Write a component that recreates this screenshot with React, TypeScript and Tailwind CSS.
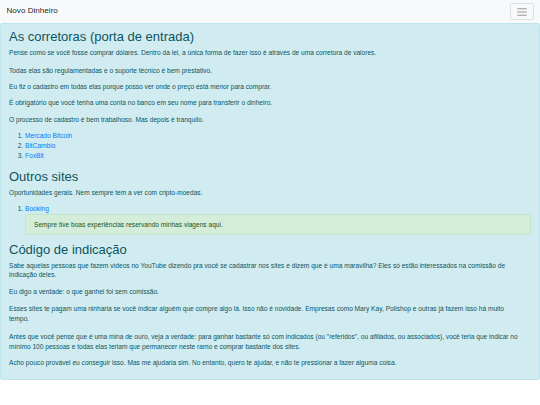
import React from "react";

export default function App() {
  return (
    <div className="min-h-[405px] bg-white text-[6.6px] leading-[9.75px] text-[#212529]" style={{ fontFamily: '"Liberation Sans", Arial, sans-serif' }}>
      <nav className="flex items-center justify-between bg-[#f8f9fa] px-[6.5px] py-[3.25px]">
        <span className="py-[2px] text-[8.125px] leading-[1.5] text-black/90">Novo Dinheiro</span>
        <button className="flex h-[16.5px] w-[24px] items-center justify-center rounded-[1.6px] border border-black/10">
          <svg width="12" height="12" viewBox="0 0 30 30">
            <path d="M4 7h22M4 15h22M4 23h22" stroke="rgba(0,0,0,0.5)" strokeWidth="2" strokeLinecap="round" />
          </svg>
        </button>
      </nav>
      <div className="mb-[6.5px] rounded-[1.6px] border border-[#bee5eb] bg-[#d1ecf1] px-[8px] py-[4.875px] text-[#0c5460]">
        <h2 className="mb-[3.25px] text-[13px] leading-[1.2] font-medium">As corretoras (porta de entrada)</h2>
        <p className="mb-[8.5px]">Pense como se você fosse comprar dólares. Dentro da lei, a única forma de fazer isso é através de uma corretora de valores.</p>
        <p className="mb-[6.5px]">Todas elas são regulamentadas e o suporte técnico é bem prestativo.</p>
        <p className="mb-[6.5px]">Eu fiz o cadastro em todas elas porque posso ver onde o preço está menor para comprar.</p>
        <p className="mb-[6.5px]">É obrigatório que você tenha uma conta no banco em seu nome para transferir o dinheiro.</p>
        <p className="mb-[6.5px]">O processo de cadastro é bem trabalhoso. Mas depois é tranquilo.</p>
        <ol className="mb-[8px] list-decimal pl-[16px] leading-[10px]">
          <li><a className="text-[#007bff]">Mercado Bitcoin</a></li>
          <li><a className="text-[#007bff]">BitCambio</a></li>
          <li><a className="text-[#007bff]">FoxBit</a></li>
        </ol>
        <h2 className="mb-[3.25px] text-[13px] leading-[1.2] font-medium">Outros sites</h2>
        <p className="mb-[6.5px]">Oportunidades gerais. Nem sempre tem a ver com cripto-moedas.</p>
        <ol className="mb-[6.5px] list-decimal pl-[16px]">
          <li>
            <a className="text-[#007bff]">Booking</a>
            <div className="rounded-[1.6px] border border-[#c3e6cb] bg-[#d4edda] px-[8px] py-[4.875px] text-[#155724]">
              Sempre tive boas experiências reservando minhas viagens aqui.
            </div>
          </li>
        </ol>
        <h2 className="mb-[3.25px] text-[13px] leading-[1.2] font-medium">Código de indicação</h2>
        <p className="mb-[6.5px]">Sabe aquelas pessoas que fazem vídeos no YouTube dizendo pra você se cadastrar nos sites e dizem que é uma maravilha? Eles só estão interessados na comissão de indicação deles.</p>
        <p className="mb-[8px]">Eu digo a verdade: o que ganhei foi sem comissão.</p>
        <p className="mb-[8px]">Esses sites te pagam uma ninharia se você indicar alguém que compre algo lá. Isso não é novidade. Empresas como Mary Kay, Polishop e outras já fazem isso há muito<br />tempo.</p>
        <p className="mb-[6.5px]">Antes que você pense que é uma mina de ouro, veja a verdade: para ganhar bastante só com indicados (ou "referidos", ou afiliados, ou associados), você teria que indicar no mínimo 100 pessoas e todas elas teriam que permanecer neste ramo e comprar bastante dos sites.</p>
        <p className="mb-[6.5px]">Acho pouco provável eu conseguir isso. Mas me ajudaria sim. No entanto, quero te ajudar, e não te pressionar a fazer alguma coisa.</p>
      </div>
    </div>
  );
}
